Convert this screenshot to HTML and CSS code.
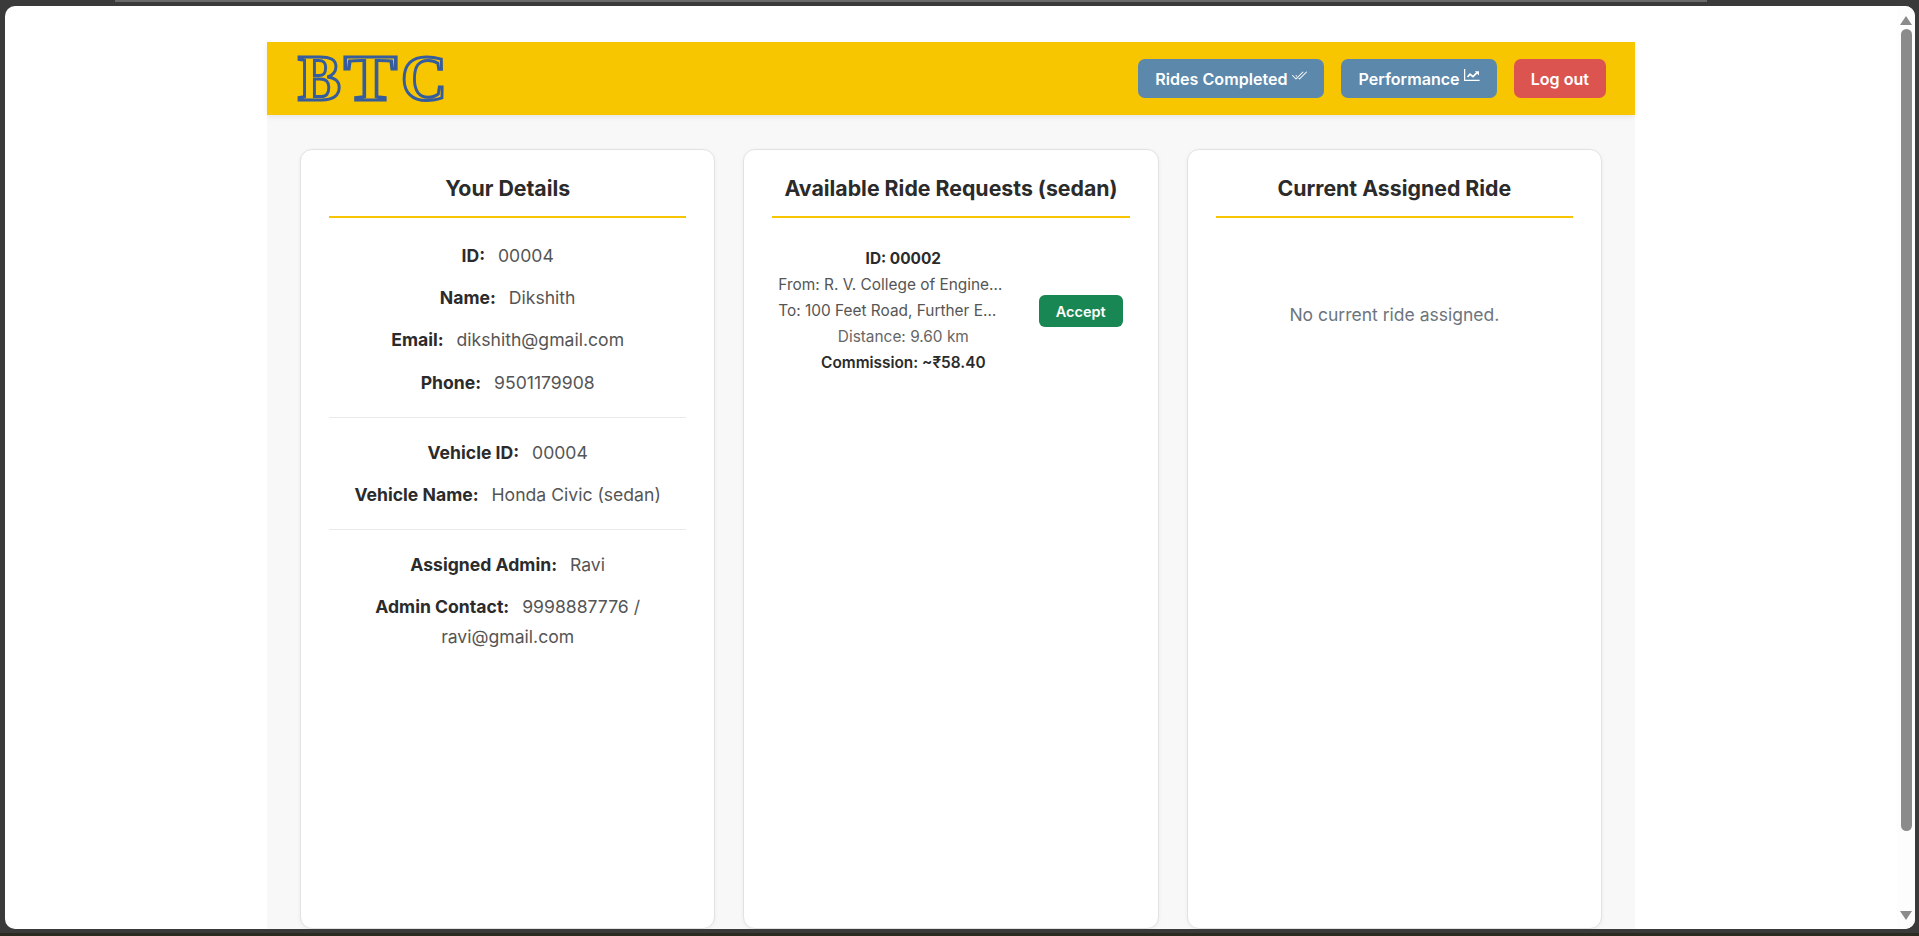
FILE: index.html
```html
<!DOCTYPE html>
<html lang="en">
<head>
	<meta charset="UTF-8">
	<title>Driver Dashboard</title>
	<link rel="stylesheet" href="styles.css">
</head>
<body>
	<div class="edge"></div>
	<div class="window">
		<div class="page">
			<div class="container">
				<header class="topbar">
					<svg class="logo" width="156" height="80" viewBox="0 0 156 80">
						<text class="logo-text" x="1" y="61" textLength="43" lengthAdjust="spacingAndGlyphs">B</text>
						<text class="logo-text" x="47" y="61" textLength="53" lengthAdjust="spacingAndGlyphs">T</text>
						<text class="logo-text" x="104" y="61" textLength="46" lengthAdjust="spacingAndGlyphs">C</text>
					</svg>
					<nav class="actions">
						<a class="btn btn-blue" href="#">Rides Completed
							<svg class="icon" width="16" height="16" viewBox="0 0 16 16" fill="currentColor"><path d="M12.354 4.354a.5.5 0 0 0-.708-.708L5 10.293 1.854 7.146a.5.5 0 1 0-.708.708l3.5 3.5a.5.5 0 0 0 .708 0l7-7zm-4.208 7-.896-.897.707-.707.543.543 6.646-6.647a.5.5 0 0 1 .708.708l-7 7a.5.5 0 0 1-.708 0z"/><path d="m5.354 7.146.896.897-.707.707-.897-.896a.5.5 0 1 1 .708-.708z"/></svg>
						</a>
						<a class="btn btn-blue" href="#">Performance
							<svg class="icon" width="16" height="16" viewBox="0 0 16 16"><path d="M.6 0V11.3H15.6" fill="none" stroke="currentColor" stroke-width="1.3"/><path d="M3.5 8 6 5.2 9 7.6 13 3.6" fill="none" stroke="currentColor" stroke-width="1.8"/><path d="M10.8 2.2H15V6.4Z" fill="currentColor"/></svg>
						</a>
						<a class="btn btn-red" href="#">Log out</a>
					</nav>
				</header>
				<main class="columns">
					<section class="card">
						<h2 class="card-title">Your Details</h2>
						<p class="row"><b>ID:</b> 00004</p>
						<p class="row"><b>Name:</b> Dikshith</p>
						<p class="row"><b>Email:</b> dikshith@gmail.com</p>
						<p class="row"><b>Phone:</b> 9501179908</p>
						<hr class="divider">
						<p class="row"><b>Vehicle ID:</b> 00004</p>
						<p class="row"><b>Vehicle Name:</b> Honda Civic (sedan)</p>
						<hr class="divider">
						<p class="row"><b>Assigned Admin:</b> Ravi</p>
						<p class="row"><b>Admin Contact:</b> 9998887776 / ravi@gmail.com</p>
					</section>
					<section class="card">
						<h2 class="card-title">Available Ride Requests (sedan)</h2>
						<div class="ride">
							<div class="ride-info">
								<div class="ride-id">ID: 00002</div>
								<div class="ride-line">From: R. V. College of Engineering</div>
								<div class="ride-line">To: 100 Feet Road, Further Extension</div>
								<div class="ride-dist">Distance: 9.60 km</div>
								<div class="ride-fee">Commission: ~₹58.40</div>
							</div>
							<a class="btn-accept" href="#">Accept</a>
						</div>
					</section>
					<section class="card">
						<h2 class="card-title">Current Assigned Ride</h2>
						<p class="empty">No current ride assigned.</p>
					</section>
				</main>
			</div>
		</div>
		<div class="scrollbar">
			<span class="arrow-up"></span>
			<div class="track"><div class="thumb"></div></div>
			<span class="arrow-down"></span>
		</div>
	</div>
</body>
</html>
```

FILE: styles.css
```css
*{box-sizing: border-box;}
html,body{height: 100%;margin: 0;}
body{
	background: #3a3a3a;
	padding: 6px 4px 4px 5px;
	border-bottom: 3px solid #2c2b22;
	font-family: "Inter", "Liberation Sans", sans-serif;
	overflow: hidden;
}

/* edge of the window behind */
.edge{
	position: absolute;
	top: 0;
	left: 115px;
	width: 1592px;
	height: 2px;
	background: #6a6a6a;
}

.window{
	height: 100%;
	background: #fff;
	border-radius: 10px;
	display: flex;
	overflow: hidden;
}
.page{
	flex: 1;
	padding-top: 36px;
	overflow: hidden;
}
.container{
	width: 1368px;
	height: 100%;
	margin: 0 auto;
	background: #f8f8f8;
	display: flex;
	flex-direction: column;
}

.topbar{
	height: 73px;
	flex: none;
	background: #f7c600;
	padding: 0 29px 0 30px;
	display: flex;
	align-items: center;
	justify-content: space-between;
	box-shadow: 0 2px 6px rgba(0,0,0,0.08);
}
.logo{display: block;flex: none;}
.logo-text{
	font-family: "Liberation Serif", serif;
	font-size: 66px;
	font-weight: 700;
	fill: #f7c600;
	stroke: #355c9c;
	stroke-width: 3;
}

.actions{display: flex;gap: 17px;}
.btn{
	height: 39px;
	padding: 0 17px;
	border-radius: 7px;
	color: #fff;
	font-size: 16.1px;
	font-weight: 600;
	text-decoration: none;
	display: flex;
	align-items: center;
	gap: 4px;
}
.btn-blue{background: #5b88ab;}
.btn-red{background: #dc5450;}
.icon{margin-top: -4px;}
.btn:first-child .icon{margin-top: -6px;}

.columns{
	flex: 1;
	padding: 34px 33px 0;
	display: grid;
	grid-template-columns: repeat(3,1fr);
	gap: 28px;
	min-height: 0;
}
.card{
	background: #fff;
	border: 1px solid #e2e2e2;
	border-radius: 12px;
	padding: 0 28px;
	text-align: center;
	box-shadow: 0 1px 4px rgba(0,0,0,0.05);
}
.card-title{
	margin: 0 0 22.5px;
	padding: 24px 0 14px;
	border-bottom: 2px solid #f7c600;
	color: #2b2b2b;
	font-size: 21.3px;
	line-height: 28px;
	font-weight: 700;
}
.row{
	margin: 0 0 13px;
	color: #555;
	font-size: 17.6px;
	line-height: 29.4px;
}
.row b{
	color: #2b2b2b;
	font-weight: 700;
	margin-right: 8px;
}
.divider{
	margin: 20px 0 19.5px;
	border: 0;
	border-top: 1px solid #eaeaea;
}

.ride{
	margin-top: 28px;
	padding: 0 7px 0 6px;
	display: flex;
	align-items: center;
	justify-content: space-between;
}
.ride-info{
	width: 250px;
	font-size: 15.4px;
	line-height: 26px;
	color: #555;
	text-align: center;
}
.ride-line{
	width: 225px;
	white-space: nowrap;
	overflow: hidden;
	text-overflow: ellipsis;
	text-align: left;
}
.ride-id{font-weight: 700;color: #2b2b2b;}
.ride-dist{color: #666;}
.ride-fee{font-weight: 600;color: #2b2b2b;}
.btn-accept{
	width: 84px;
	height: 32px;
	border-radius: 6px;
	background: #198754;
	color: #fff;
	font-size: 14.5px;
	font-weight: 600;
	text-decoration: none;
	display: flex;
	align-items: center;
	justify-content: center;
}
.empty{
	margin: 82px 0 0;
	color: #6c757d;
	font-size: 17.5px;
	line-height: 30px;
}

.scrollbar{
	width: 18px;
	background: #fdfdfd;
	padding: 10px 3px 9px 3px;
	display: flex;
	flex-direction: column;
	align-items: center;
}
.arrow-up,.arrow-down{
	width: 0;
	height: 0;
	border-left: 6px solid transparent;
	border-right: 6px solid transparent;
}
.arrow-up{border-bottom: 9px solid #8b8b8b;}
.arrow-down{border-top: 9px solid #8b8b8b;}
.track{flex: 1;width: 11px;padding-top: 4px;}
.thumb{
	width: 11px;
	height: 802px;
	background: #8b8b8b;
	border-radius: 6px;
}
```
